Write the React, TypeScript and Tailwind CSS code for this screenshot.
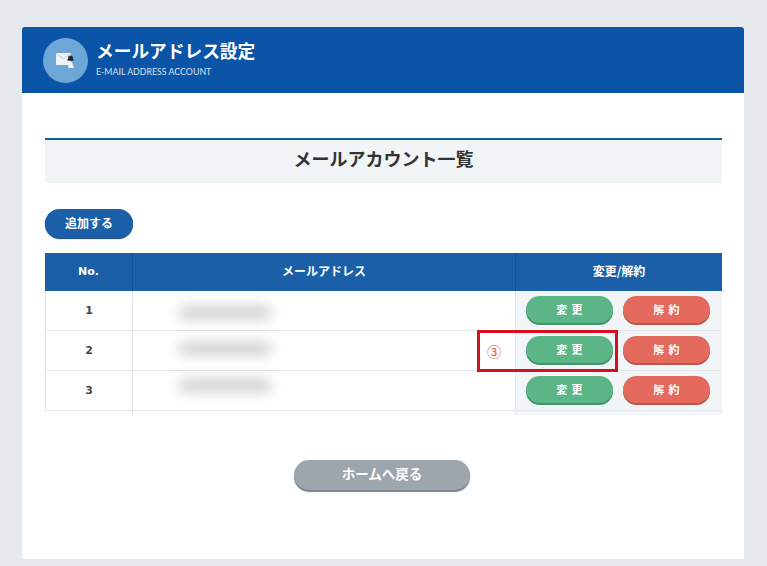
const jp = 'font-["Noto_Sans_CJK_JP","Noto_Sans",sans-serif]';

function ActionButton({ label, color }: { label: string; color: string }) {
  return (
    <button className={`mb-[2px] h-[27px] w-[87px] rounded-full pb-[1px] pl-[4px] text-[11px] font-bold tracking-[0.38em] text-white ${color}`}>
      {label}
    </button>
  );
}

function Row({ no, smudgeTop, boxed }: { no: number; smudgeTop: number; boxed?: boolean }) {
  return (
    <div className="flex h-10 border-b border-[#e4e7ea]">
      <div className="flex w-[88px] items-center justify-center border-l border-r border-[#e4e7ea] pt-[2px] text-[11px] font-bold text-[#444]" style={{ fontFamily: 'DejaVu Sans, sans-serif' }}>
        {no}
      </div>
      <div className="relative flex-1 border-r border-[#e4e7ea]">
        <div className="absolute left-[46px] h-[11px] w-[92px] rounded-full bg-[#c4c4c4] blur-[7px]" style={{ top: smudgeTop }} />
        {boxed && <span className="absolute left-[354px] top-[13px] text-[14px] leading-none text-[#d9564f]">③</span>}
      </div>
      <div className="relative flex w-[206px] items-center gap-[10px] bg-[#f1f5f7] pl-[10px]">
        {boxed && <div className="pointer-events-none absolute -left-[39px] -top-[1px] z-10 h-[42px] w-[141px] border-[3px] border-[#d4101e]" />}
        <ActionButton label="変更" color="bg-[#5bb587] shadow-[0_2px_0_#44916b]" />
        <ActionButton label="解約" color="bg-[#e46a5e] shadow-[0_2px_0_#b9564c]" />
      </div>
    </div>
  );
}

export default function App() {
  return (
    <div className={`h-[566px] w-[767px] overflow-hidden bg-[#e6eaef] px-[22px] pt-[27px] ${jp}`}>
      <div className="h-[532px] w-[722px] overflow-hidden rounded-t-[3px] bg-white">
        <header className="flex h-[66px] items-center gap-[8px] bg-[#0b55a8] pl-[21px]">
          <div className="flex h-[45px] w-[45px] items-center justify-center rounded-full bg-[#6fa6d8]">
            <svg width="22" height="20" viewBox="0 0 22 20">
              <rect x="1" y="3" width="15" height="12" fill="#eef3f8" />
              <path d="M1 3l7.5 6L16 3" fill="none" stroke="#b9cde2" strokeWidth="1" />
              <circle cx="15.5" cy="8" r="2.5" fill="#2b2b33" />
              <rect x="12.5" y="9" width="6" height="1.6" fill="#1c1c22" />
              <path d="M13 18l1-6h3l2 6z" fill="#e8eff6" />
            </svg>
          </div>
          <div className="text-white">
            <div className="text-[17.7px] font-bold leading-[14px]">メールアドレス設定</div>
            <div className="mt-[9px] text-[8.8px] leading-[11px] text-[#d5e2f0]" style={{ fontFamily: 'Lato, sans-serif' }}>E-MAIL ADDRESS ACCOUNT</div>
          </div>
        </header>

        <div className="pl-[23px] pr-[22px] pt-[45px]">
          <div className="flex h-[45px] items-center justify-center border-t-2 border-[#1a5c96] bg-[#f1f5f6] pb-[6px] text-[18px] font-bold text-[#333]">
            メールアカウント一覧
          </div>

          <button className="mt-[26px] h-[29px] w-[88px] rounded-full bg-[#1a5fa8] pb-[2px] text-[12px] font-bold text-white shadow-[0_1px_1px_#0d3f78]">
            追加する
          </button>

          <div className="mt-[15px] w-[677px]">
            <div className="flex h-[38px] bg-[#1a5fa8] text-[12px] font-bold text-white">
              <div className="flex w-[88px] items-center justify-center border-r border-[#15508f] text-[11px]" style={{ fontFamily: 'DejaVu Sans, sans-serif' }}>No.</div>
              <div className="flex flex-1 items-center justify-center border-r border-[#15508f] pb-[2px]">メールアドレス</div>
              <div className="flex w-[206px] items-center justify-center pb-[2px]">変更/解約</div>
            </div>
            <Row no={1} smudgeTop={16} />
            <Row no={2} smudgeTop={12} boxed />
            <Row no={3} smudgeTop={9} />
            <div className="flex h-[4px]">
              <div className="ml-[87px] w-[384px] border-l border-r border-[#e4e7ea]" />
              <div className="w-[206px] bg-[#f1f5f7]" />
            </div>
          </div>

          <div className="mt-[45px] flex justify-center">
            <button className="ml-[-3px] h-[30px] w-[176px] rounded-full bg-[#9ea6ad] pb-[3px] text-[13.5px] font-bold text-white shadow-[0_2px_1px_#7b8289]">
              ホームへ戻る
            </button>
          </div>
        </div>
      </div>
    </div>
  );
}
